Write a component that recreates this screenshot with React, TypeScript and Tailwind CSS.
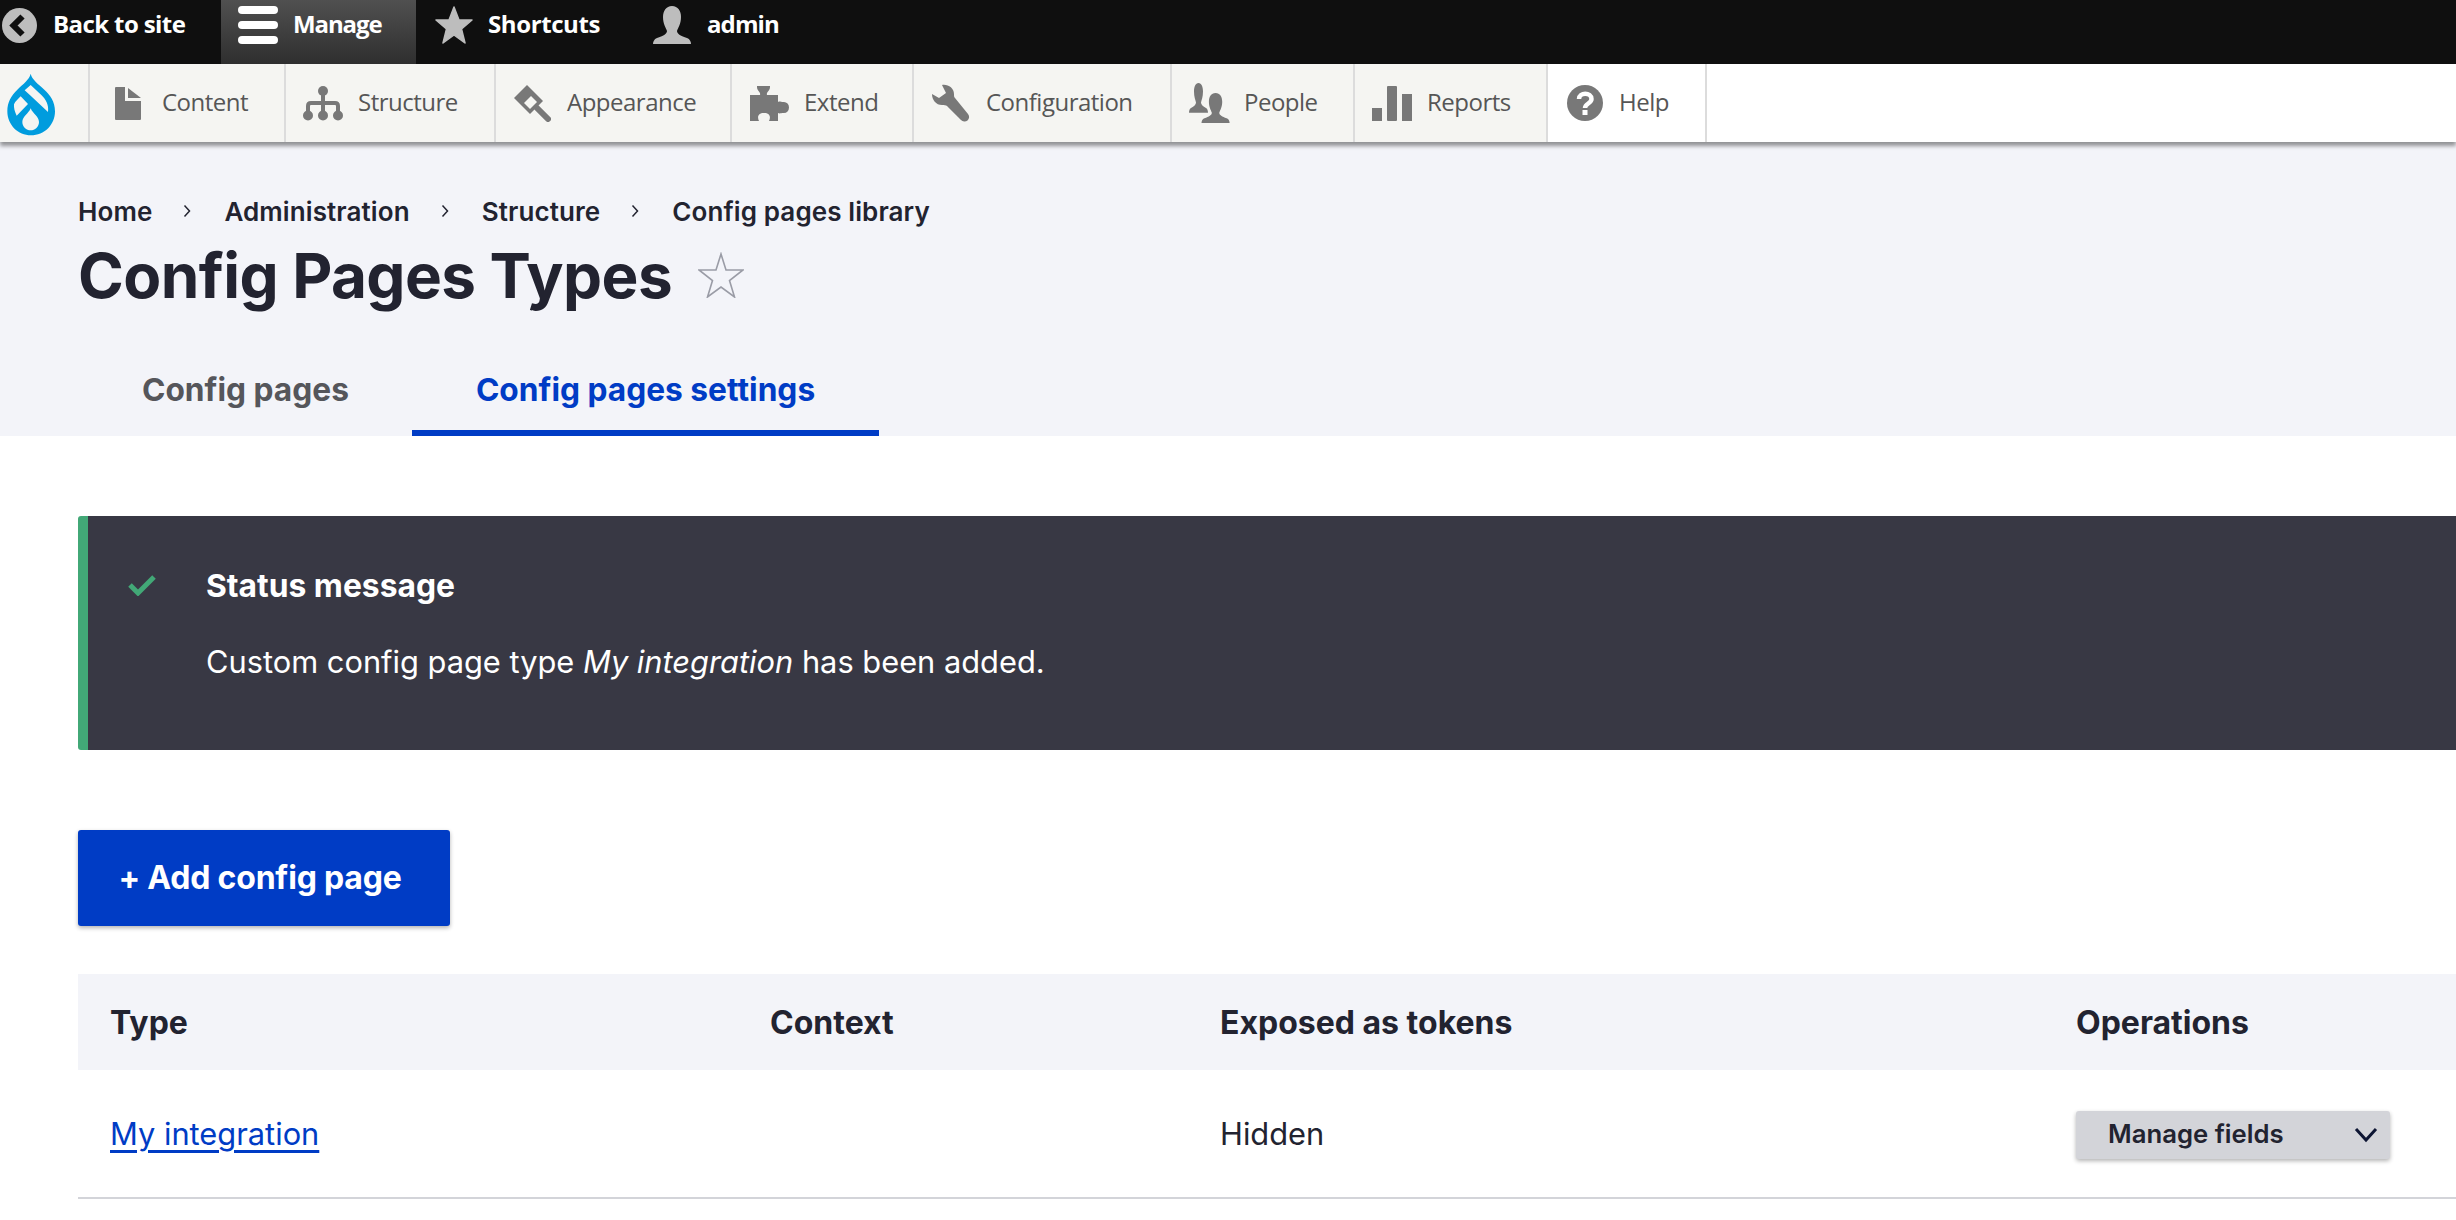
const PERSON =
  "M19 0C13 0 10 5 10 11C10 18 13 22 14 25C14 28 10 30 4 32C1 33 0 36 0 38H38C38 36 37 33 34 32C28 30 24 28 24 25C25 22 28 18 28 11C28 5 25 0 19 0Z";

const BackIcon = () => (
  <svg viewBox="0 0 35 35" className="w-[35px] h-[35px]">
    <circle cx="17.5" cy="17.5" r="17.5" fill="#bdbdbd" />
    <path d="M20.5 8.5L11.5 17.5L20.5 26.5" fill="none" stroke="#0f0f0f" strokeWidth="6" />
  </svg>
);

const BurgerIcon = () => (
  <svg viewBox="0 0 40 38" className="w-[40px] h-[38px]" fill="#fff">
    <rect x="0" y="0" width="40" height="8" rx="4" />
    <rect x="0" y="15" width="40" height="8" rx="4" />
    <rect x="0" y="30" width="40" height="8" rx="4" />
  </svg>
);

const StarIcon = () => (
  <svg viewBox="0 0 38 38" className="w-[38px] h-[38px]">
    <path
      d="M19 1L24 14H37L26.5 23L30 37L19 29L8 37L11.5 23L1 14H14Z"
      fill="#bdbdbd"
      stroke="#bdbdbd"
      strokeWidth="1.5"
      strokeLinejoin="round"
    />
  </svg>
);

const UserIcon = () => (
  <svg viewBox="0 0 38 38" className="w-[38px] h-[38px]">
    <path d={PERSON} fill="#bdbdbd" />
  </svg>
);

const DrupalLogo = () => (
  <svg viewBox="0 0 192 216" className="w-[64px] h-[72px]">
    <path
      d="M92 20C88 38 70 50 52 68C34 86 22 104 22 133C22 174 54 205 93 205C133 205 165 174 165 133C165 102 150 84 133 68C114 50 96 38 92 20Z"
      fill="#009cde"
    />
    <path d="M92 54L124 84C138 98 147 113 144 135L92 86L74 70Z" fill="#f5f5f2" />
    <path d="M62 88L84 111L50 146C44 134 41 122 42 112C46 103 54 96 62 88Z" fill="#f5f5f2" />
    <path d="M92 124C98 140 117 148 117 165C117 179 105 190 92 190C79 190 67 179 67 165C67 148 86 140 92 124Z" fill="#f5f5f2" />
  </svg>
);

const ContentIcon = () => (
  <svg viewBox="0 0 26 33" className="w-[26px] h-[33px]" fill="#787878">
    <path d="M1 0H10V14H26V32A1 1 0 0 1 25 33H1A1 1 0 0 1 0 32V1A1 1 0 0 1 1 0Z" />
    <path d="M13 1L26 11H13Z" />
  </svg>
);

const StructureIcon = () => (
  <svg viewBox="0 0 40 35" className="w-[40px] h-[35px]" fill="#787878">
    <circle cx="20" cy="5" r="5" />
    <circle cx="5" cy="29.5" r="5" />
    <circle cx="20" cy="29.5" r="5" />
    <circle cx="35" cy="29.5" r="5" />
    <path d="M5 29V20Q5 17 8 17H32Q35 17 35 20V29M20 5V29" fill="none" stroke="#787878" strokeWidth="4" />
  </svg>
);

const AppearanceIcon = () => (
  <svg viewBox="0 0 38 38" className="w-[38px] h-[38px]" fill="#787878">
    <path d="M1 14L14 1L30 17L17 30Z" />
    <path d="M7 15L14 8L24 18L17 25Z" fill="#f5f5f2" />
    <path d="M14 2L21 9L10 20L3 13Z" />
    <path d="M24 24L35 35" fill="none" stroke="#787878" strokeWidth="6" strokeLinecap="round" />
  </svg>
);

const ExtendIcon = () => (
  <svg viewBox="0 0 40 35" className="w-[40px] h-[35px]" fill="#787878">
    <path d="M0 9H10C11 6 7 5 7 1V0H20V1C20 5 16 6 17 9H28V16C30 15 30 16 34 16A5 5.5 0 0 1 34 27C30 27 30 28 28 27V35H19C21 31 20 27 14 27C8 27 7 31 9 35H0Z" />
  </svg>
);

const ConfigIcon = () => (
  <svg viewBox="0 0 38 38" className="w-[38px] h-[38px]" fill="#787878">
    <path d="M10 1C16 0 22 4 22 10C22 12 22 13 23 14L36 30A4.5 4.5 0 0 1 29 36L15 22C14 21 12 21 10 21C4 21 0 16 0 10L7 14L14 9Z" />
  </svg>
);

const PeopleIcon = () => (
  <svg viewBox="0 0 41 40" className="w-[41px] h-[40px]" fill="#787878">
    <path d={PERSON} transform="scale(0.5 0.78)" />
    <path
      d={PERSON}
      transform="translate(12.5 10) scale(0.74 0.79)"
      stroke="#f5f5f2"
      strokeWidth="3"
      paintOrder="stroke"
    />
  </svg>
);

const ReportsIcon = () => (
  <svg viewBox="0 0 40 35" className="w-[40px] h-[35px]" fill="#787878">
    <rect x="0" y="22" width="10" height="13" />
    <rect x="15" y="0" width="10" height="35" rx="1" />
    <rect x="30" y="8" width="10" height="27" />
  </svg>
);

const HelpIcon = () => (
  <svg viewBox="0 0 36 36" className="w-[36px] h-[36px]">
    <circle cx="18" cy="18" r="18" fill="#787878" />
    <path
      d="M12 14C12 7 24.500 7 24.500 14C24.500 18.500 18 18.500 18 23"
      fill="none"
      stroke="#fff"
      strokeWidth="4.500"
    />
    <rect x="15.500" y="25" width="5" height="5" fill="#fff" />
  </svg>
);

const Chevron = () => (
  <svg viewBox="0 0 8 14" className="w-[8px] h-[14px]">
    <path d="M1.500 1.500L6.500 7L1.500 12.500" fill="none" stroke="#222330" strokeWidth="1.500" />
  </svg>
);

const menuItems = [
  { label: "Content", Icon: ContentIcon, box: "w-[196px] pl-[25px] gap-[21px] bg-[#f5f5f2]" },
  { label: "Structure", Icon: StructureIcon, box: "w-[210px] pl-[17px] gap-[15px] bg-[#f5f5f2]" },
  { label: "Appearance", Icon: AppearanceIcon, box: "w-[236px] pl-[17px] gap-[16px] bg-[#f5f5f2]" },
  { label: "Extend", Icon: ExtendIcon, box: "w-[182px] pl-[18px] gap-[14px] bg-[#f5f5f2]" },
  { label: "Configuration", Icon: ConfigIcon, box: "w-[258px] pl-[18px] gap-[16px] bg-[#f5f5f2]" },
  { label: "People", Icon: PeopleIcon, box: "w-[183px] pl-[17px] gap-[14px] bg-[#f5f5f2]" },
  { label: "Reports", Icon: ReportsIcon, box: "w-[193px] pl-[17px] gap-[15px] bg-[#f5f5f2]" },
  { label: "Help", Icon: HelpIcon, box: "w-[159px] pl-[19px] gap-[16px] bg-white" },
];

const crumbs = ["Home", "Administration", "Structure", "Config pages library"];

const Toolbar = () => (
  <div className="relative z-10 shadow-[0_4px_4px_rgba(0,0,0,0.4)] font-['Open_Sans',sans-serif]">
    <div className="flex h-[64px] bg-[#0f0f0f] text-white font-bold text-[24px]">
      <div className="flex items-center w-[221px] pl-[2px] gap-[16px] pb-[14px]">
        <BackIcon />
        <span className="pb-[2px] tracking-[-0.6px]">Back to site</span>
      </div>
      <div className="flex items-center w-[195px] pl-[17px] gap-[15px] pb-[14px] bg-gradient-to-b from-[#505050] to-[#2f2f2f]">
        <BurgerIcon />
        <span className="pb-[2px] tracking-[-1.1px]">Manage</span>
      </div>
      <div className="flex items-center w-[237px] pl-[19px] gap-[15px] pb-[14px]">
        <StarIcon />
        <span className="pb-[2px] tracking-[-0.4px]">Shortcuts</span>
      </div>
      <div className="flex items-center gap-[16px] pb-[14px]">
        <UserIcon />
        <span className="pb-[2px] tracking-[-0.9px]">admin</span>
      </div>
    </div>
    <div className="flex h-[78px] bg-white text-[24px] text-[#565656] tracking-[-0.5px]">
      <div className="flex items-center w-[90px] bg-[#f5f5f2] border-r-2 border-[#dcdcdc]">
        <DrupalLogo />
      </div>
      {menuItems.map(({ label, Icon, box }) => (
        <div key={label} className={`flex items-center border-r-2 border-[#dcdcdc] ${box}`}>
          <Icon />
          <span className="pb-[2px]">{label}</span>
        </div>
      ))}
    </div>
  </div>
);

const PageHeader = () => (
  <div className="h-[294px] bg-[#f3f4f9] pl-[78px] pt-[53px] text-[#222330]">
    <nav className="flex items-center h-[32px] text-[26px] font-semibold tracking-[0.1px]">
      {crumbs.map((crumb, index) => (
        <div key={crumb} className="flex items-center">
          {index > 0 && (
            <span className="ml-[31px] mr-[33px]">
              <Chevron />
            </span>
          )}
          <span>{crumb}</span>
        </div>
      ))}
    </nav>
    <div className="flex items-center gap-[26px] h-[74px] mt-[11px]">
      <h1 className="text-[62px] font-bold tracking-[-0.6px]">Config Pages Types</h1>
      <svg viewBox="0 0 46 46" className="w-[46px] h-[46px]">
        <path
          d="M23 2L28 18H45L31.500 28.500L36.500 45L23 35L9.500 45L14.500 28.500L1 18H18Z"
          fill="none"
          stroke="#9a9ca6"
          strokeWidth="1.600"
        />
      </svg>
    </div>
    <div className="flex mt-[28px] text-[31.7px] font-bold">
      <a className="flex items-center h-[96px] pl-[64px] pr-[63px] pt-[3px] text-[#55565b]">Config pages</a>
      <a className="flex items-center h-[96px] px-[64px] pt-[9px] text-[#003cc5] border-b-[6px] border-[#003cc5]">
        Config pages settings
      </a>
    </div>
  </div>
);

const StatusMessage = () => (
  <div className="flex h-[234px] mt-[80px] bg-[#383844] border-l-[10px] border-[#42a877] rounded-l-[3px] text-white">
    <div className="pl-[40px] pt-[58px] w-[118px]">
      <svg viewBox="0 0 28 22" className="w-[28px] h-[22px]">
        <path d="M2 11L10 19L26 3" fill="none" stroke="#42a877" strokeWidth="5" />
      </svg>
    </div>
    <div className="pt-[52px]">
      <p className="text-[31.8px] font-bold leading-[36px]">Status message</p>
      <p className="text-[30.8px] leading-[44px] mt-[36px]">
        Custom config page type <em>My integration</em> has been added.
      </p>
    </div>
  </div>
);

const TypesTable = () => (
  <div className="mt-[48px] text-[#222330]">
    <div className="grid grid-cols-[659px_450px_856px_1fr] items-center h-[96px] pt-[2px] bg-[#f3f4f9] text-[32px] font-bold">
      <span className="pl-[32px]">Type</span>
      <span className="pl-[33px]">Context</span>
      <span className="pl-[33px]">Exposed as tokens</span>
      <span className="pl-[33px]">Operations</span>
    </div>
    <div className="grid grid-cols-[659px_450px_856px_1fr] items-center h-[129px] border-b-2 border-[#d3d4d9] text-[30.8px]">
      <a className="pl-[32px] pt-[1px] text-[#003cc5] underline underline-offset-[5px]">My integration</a>
      <span />
      <span className="pl-[33px] pt-[1px]">Hidden</span>
      <div className="pl-[33px] pt-[2px]">
        <button className="flex items-center justify-between w-[314px] h-[48px] pl-[32px] pr-[12px] rounded-[3px] bg-[#d3d4d9] shadow-[0_2px_4px_rgba(0,0,0,0.3)] text-[25.7px] font-semibold">
          Manage fields
          <svg viewBox="0 0 24 16" className="w-[24px] h-[16px]">
            <path d="M2 2L12 13L22 2" fill="none" stroke="#0d1533" strokeWidth="3" />
          </svg>
        </button>
      </div>
    </div>
  </div>
);

export default function App() {
  return (
    <div className="h-[1220px] overflow-hidden bg-white font-['Inter',sans-serif]">
      <Toolbar />
      <PageHeader />
      <div className="pl-[78px]">
        <StatusMessage />
        <a className="flex items-center justify-center w-[372px] h-[96px] pr-[8px] mt-[80px] rounded-[3px] bg-[#003cc5] shadow-[0_2px_4px_rgba(0,0,0,0.3)] text-[32px] font-bold tracking-[-0.2px] text-white">
          + Add config page
        </a>
        <TypesTable />
      </div>
    </div>
  );
}
